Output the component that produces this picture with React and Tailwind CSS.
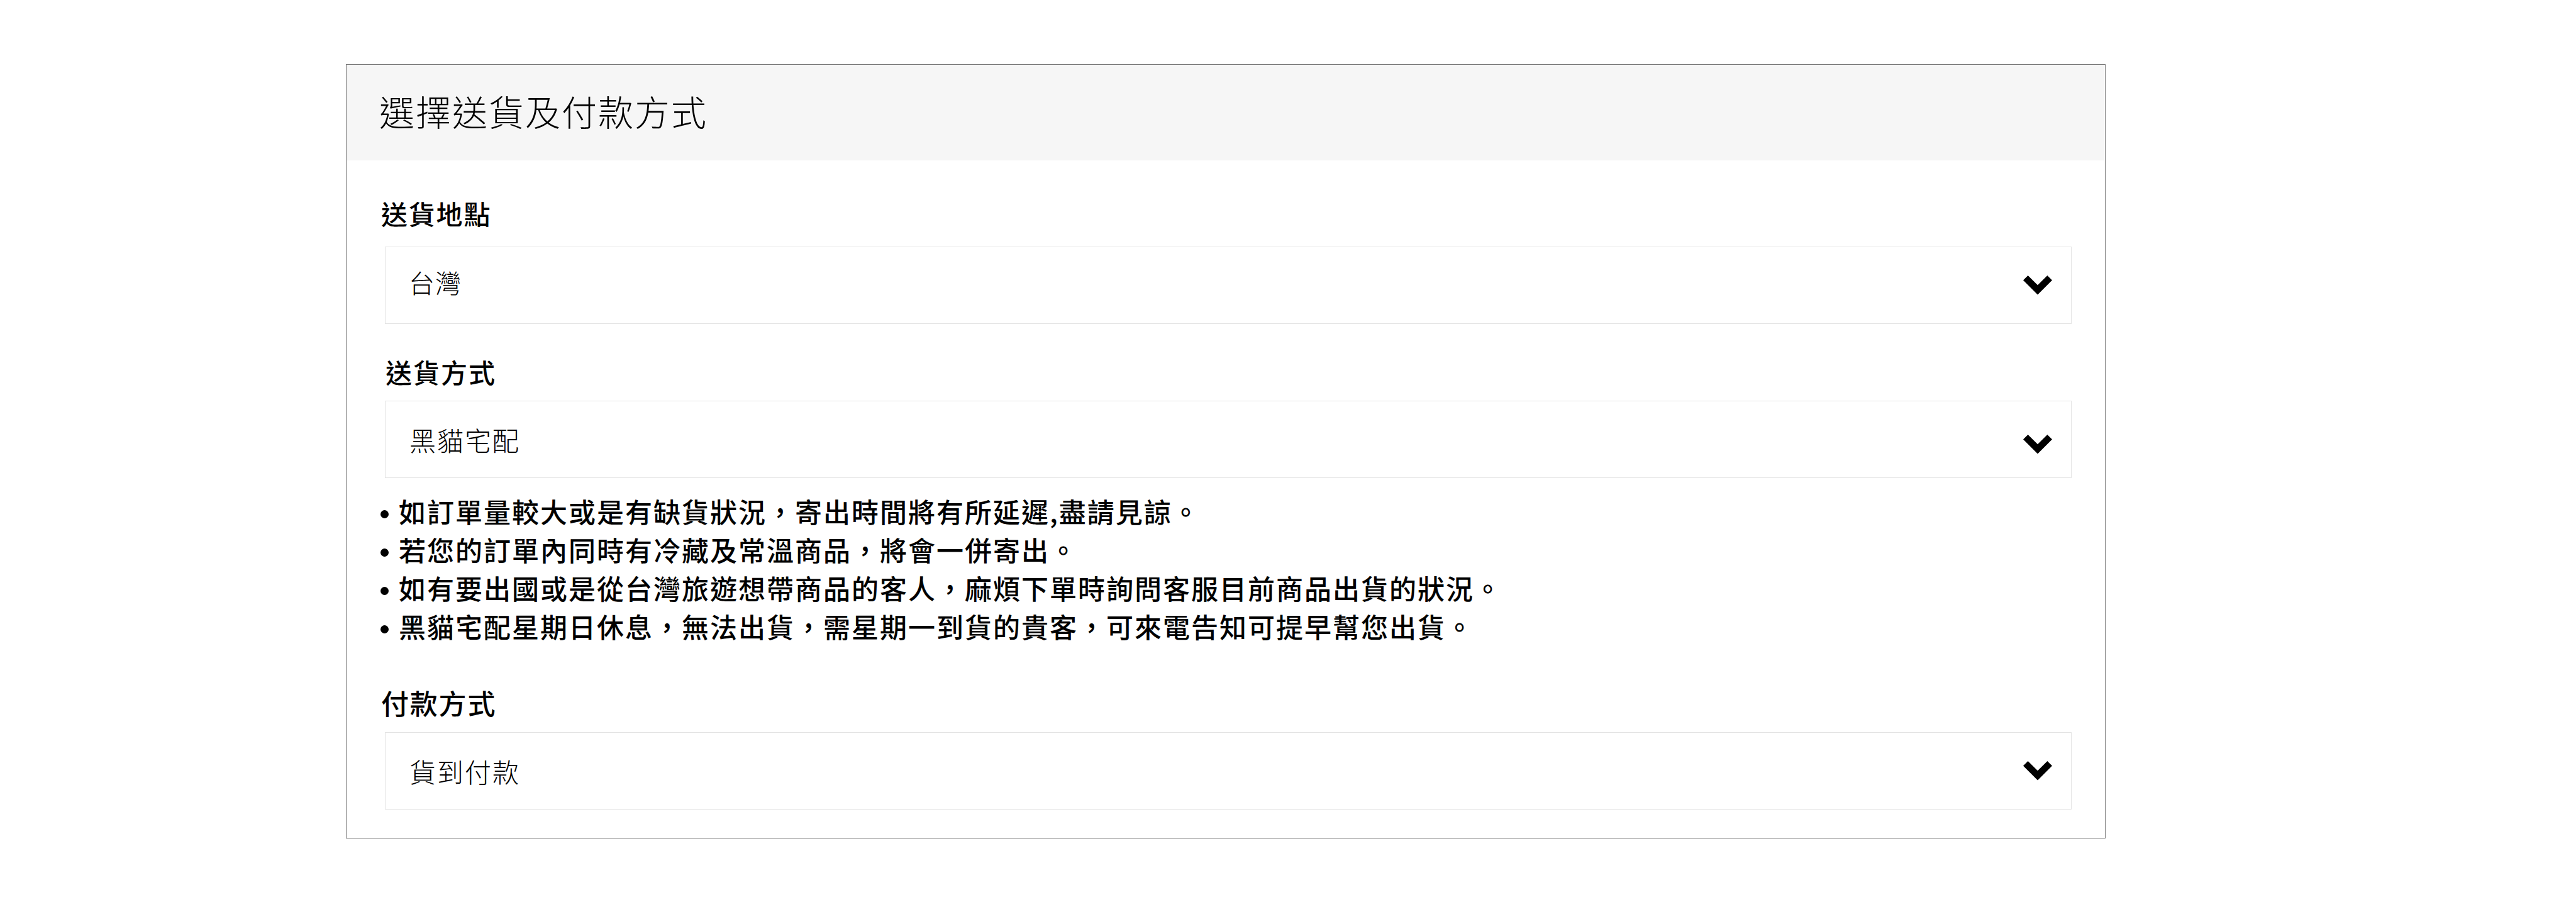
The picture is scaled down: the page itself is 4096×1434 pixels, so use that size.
import React from "react";

const notes = [
  "如訂單量較大或是有缺貨狀況，寄出時間將有所延遲,盡請見諒。",
  "若您的訂單內同時有冷藏及常溫商品，將會一併寄出。",
  "如有要出國或是從台灣旅遊想帶商品的客人，麻煩下單時詢問客服目前商品出貨的狀況。",
  "黑貓宅配星期日休息，無法出貨，需星期一到貨的貴客，可來電告知可提早幫您出貨。",
];

function Chevron({ className }) {
  return (
    <svg className={`w-[46px] h-[31px] ${className}`} viewBox="0 0 46 31" fill="black">
      <path d="M0 7.6 7.6 0 23 15.2 38.4 0 46 7.6 23 30.6Z" />
    </svg>
  );
}

function SelectBox({ value, textClass, iconClass }) {
  return (
    <button className="ml-[61px] w-[2682px] h-[123px] border border-[#e3e3e3] flex items-center justify-between pl-[38px] pr-[30px]">
      <span className={`leading-[64px] font-light ${textClass}`}>{value}</span>
      <Chevron className={iconClass} />
    </button>
  );
}

function App() {
  return (
    <div className="w-[4096px] h-[1434px] bg-white text-black pt-[102px] pl-[550px] font-['Noto_Sans_CJK_TC',sans-serif]">
      <div className="w-[2798px] h-[1231px] border border-[#777777]">
        <div className="h-[152px] bg-[#f6f6f6] flex items-center pl-[52px] pb-[6px]">
          <h1 className="text-[56px] leading-[80px] tracking-[2px] font-light">選擇送貨及付款方式</h1>
        </div>

        {/* Delivery location */}
        <div className="pt-[52px] pb-[21px]">
          <h2 className="pl-[55px] text-[42px] leading-[64px] tracking-[1.8px] font-medium">送貨地點</h2>
        </div>
        <SelectBox value="台灣" textClass="text-[41px] tracking-[1px] -ml-px pb-[11px]" iconClass="" />

        {/* Delivery method */}
        <div className="pt-[44px] pb-[14px]">
          <h2 className="pl-[62px] text-[42px] leading-[64px] tracking-[2px] font-medium">送貨方式</h2>
        </div>
        <SelectBox value="黑貓宅配" textClass="text-[42px] tracking-[2px]" iconClass="mt-[15px]" />

        <ul className="pt-[22px] pl-[54px]">
          {notes.map((note) => (
            <li key={note} className="h-[61px] flex items-center text-[43px] tracking-[2px] font-medium">
              <span className="w-[13px] h-[13px] mt-[9px] mr-[16px] rounded-full bg-black" />
              <span className="leading-[61px] whitespace-nowrap">{note}</span>
            </li>
          ))}
        </ul>

        {/* Payment method */}
        <div className="pt-[59px] pb-[15px]">
          <h2 className="pl-[55px] text-[44px] leading-[64px] tracking-[1.8px] font-medium">付款方式</h2>
        </div>
        <SelectBox value="貨到付款" textClass="text-[42px] tracking-[2px]" iconClass="mb-[1px]" />
      </div>
    </div>
  );
}

export default App;
